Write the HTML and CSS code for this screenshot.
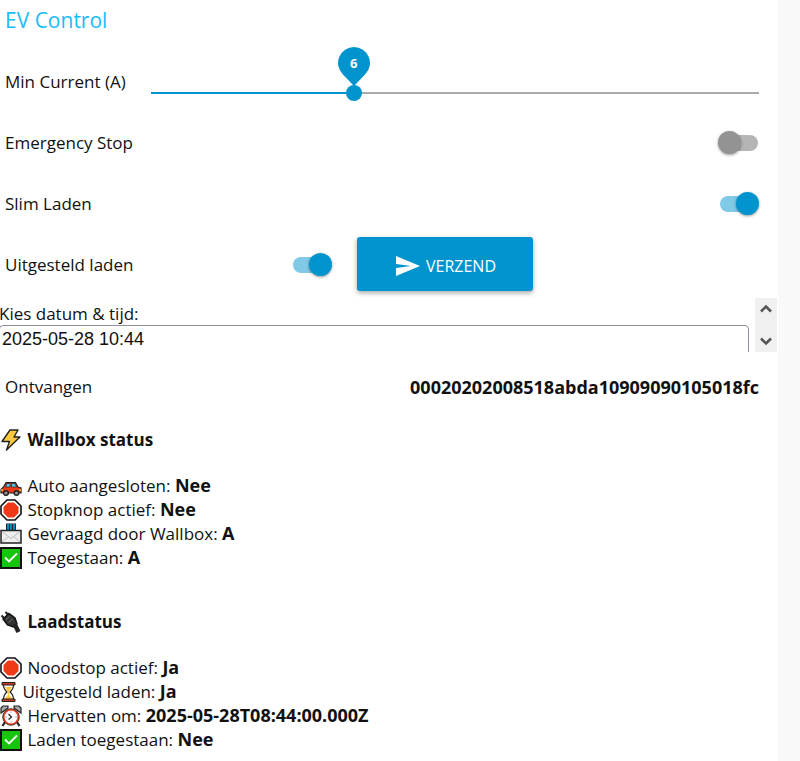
FILE: index.html
```html
<!DOCTYPE html>
<html lang="nl">
<head>
    <meta charset="UTF-8">
    <meta name="viewport" content="width=device-width, initial-scale=1.0">
    <title>EV Control</title>
    <link rel="stylesheet" href="styles.css">
</head>
<body>
    <svg class="symbols" aria-hidden="true">
        <symbol id="stop" viewBox="0 0 22 22">
            <path d="M7 1h8l6 6v8l-6 6H7l-6-6V7z" fill="#fff" stroke="#111" stroke-width="1.6"/>
            <path d="M8 3.5h6L18.500 8v6L14 18.500H8L3.500 14V8z" fill="#f03a17"/>
        </symbol>
        <symbol id="check" viewBox="0 0 22 22">
            <path d="M1 1h20v20H1z" fill="#16c60c" stroke="#111" stroke-width="2"/>
            <path d="M5 10.500l4 4 8-8" fill="none" stroke="#fff" stroke-width="1.800"/>
        </symbol>
    </svg>

    <main class="card">
        <h1>EV Control</h1>

        <div class="row">
            <label for="current" class="slider-label">Min Current (A)</label>
            <div class="slider" id="slider">
                <input type="range" id="current" min="0" max="18" value="6">
                <output class="pin" for="current">
                    <svg viewBox="0 0 32 40" aria-hidden="true"><path d="M16 0a16 16 0 0 1 11.300 27.300L16 39 4.700 27.300A16 16 0 0 1 16 0z" fill="#0094ce"/></svg>
                    <span id="currentValue">6</span>
                </output>
            </div>
        </div>

        <div class="row">
            <label for="emergency">Emergency Stop</label>
            <input type="checkbox" class="switch" id="emergency">
        </div>

        <div class="row">
            <label for="smart">Slim Laden</label>
            <input type="checkbox" class="switch" id="smart" checked>
        </div>

        <div class="columns">
            <div class="row">
                <label for="delayed">Uitgesteld laden</label>
                <input type="checkbox" class="switch" id="delayed" checked>
            </div>
            <button type="button" class="send">
                <svg viewBox="0 0 24 20" aria-hidden="true"><path d="M0 0l24 10L0 20v-8l15-2L0 8z" fill="#fff"/></svg>
                Verzend
            </button>
        </div>

        <div class="picker">
            <div class="picker-field">
                <label for="date">Kies datum &amp; tijd:</label>
                <input type="text" id="date" value="2025-05-28 10:44">
            </div>
            <div class="scroller">
                <button type="button" aria-label="Omhoog"><svg viewBox="0 0 12 9"><path d="M1 7.500l5-5 5 5" fill="none" stroke="#555" stroke-width="2.600"/></svg></button>
                <button type="button" aria-label="Omlaag"><svg viewBox="0 0 12 9"><path d="M1 1.500l5 5 5-5" fill="none" stroke="#555" stroke-width="2.600"/></svg></button>
            </div>
        </div>

        <div class="row">
            <span>Ontvangen</span>
            <b>00020202008518abda10909090105018fc</b>
        </div>

        <section class="status">
            <h2>
                <svg class="icon" viewBox="0 0 22 22"><path d="M10 1h8l-4 7h6L6.500 21l3-8.500H2z" fill="#ffc83d" stroke="#222" stroke-width="1.400" stroke-linejoin="round"/></svg>
                Wallbox status
            </h2>
            <ul>
                <li>
                    <svg class="icon" viewBox="0 0 22 22">
                        <path d="M1 14.500L3.500 12 6 7.500h9.500L18 12l3 1v5H1z" fill="#f03a17" stroke="#222" stroke-width="1.200"/>
                        <path d="M7 8.500h3.200V12H5.500zM11.500 8.500h3.200l2 3.500h-5.200z" fill="#55c8f0" stroke="#222" stroke-width=".7"/>
                        <path d="M1 15h2M19 15h2" stroke="#ffc83d" stroke-width="1.500"/>
                        <circle cx="6" cy="18" r="2.300" fill="#999" stroke="#222" stroke-width="1.500"/>
                        <circle cx="16.500" cy="18" r="2.300" fill="#999" stroke="#222" stroke-width="1.500"/>
                    </svg>
                    Auto aangesloten: <b>Nee</b>
                </li>
                <li><svg class="icon"><use href="#stop"/></svg> Stopknop actief: <b>Nee</b></li>
                <li>
                    <svg class="icon" viewBox="0 0 22 22">
                        <path d="M6 .5h10v7H6z" fill="#222"/>
                        <path d="M8 1v6M11 1v6M14 1v6" stroke="#0ba5e0" stroke-width="1.600"/>
                        <path d="M1 7.500h20v12.500H1z" fill="#eee" stroke="#222" stroke-width="1.500"/>
                        <path d="M2 8.500l9 7 9-7M2 19l6.500-5.500M20 19l-6.500-5.500" fill="none" stroke="#bbb"/>
                    </svg>
                    Gevraagd door Wallbox: <b>A</b>
                </li>
                <li><svg class="icon"><use href="#check"/></svg> Toegestaan: <b>A</b></li>
            </ul>
        </section>

        <section class="status">
            <h2>
                <svg class="icon" viewBox="0 0 22 22">
                    <path d="M1.500 4.500l4 4M5.500 1l4 4" stroke="#222" stroke-width="2"/>
                    <path d="M3 8l6-5.500 6 4.500 2 6-3.500 3-6-2z" fill="#333" stroke="#111" stroke-width="1.400"/>
                    <path d="M6 8.500l3.500-3M8.500 11.500l4-3.500" stroke="#777" stroke-width=".8"/>
                    <path d="M14.500 13l4 8" stroke="#222" stroke-width="4.500"/>
                </svg>
                Laadstatus
            </h2>
            <ul>
                <li><svg class="icon"><use href="#stop"/></svg> Noodstop actief: <b>Ja</b></li>
                <li>
                    <svg class="icon narrow" viewBox="0 0 16 22">
                        <path d="M3 3.500h10c0 4-1 5.500-3.500 7.500 2.500 2 3.500 3.500 3.500 7.500H3c0-4 1-5.500 3.500-7.500C4 9 3 7.500 3 3.500z" fill="#fff" stroke="#222" stroke-width="1.200"/>
                        <path d="M4.500 6h7L8.600 11v3l3.400 4H4l3.400-4v-3z" fill="#ffc83d"/>
                        <path d="M1.500 1.500h13v2.500h-13zM1.500 18h13v2.500h-13z" fill="#c93a1e" stroke="#222"/>
                    </svg>
                    Uitgesteld laden: <b>Ja</b>
                </li>
                <li>
                    <svg class="icon" viewBox="0 0 22 22">
                        <path d="M5 17l-2.500 4M17 17l2.500 4" stroke="#222" stroke-width="2.200"/>
                        <path d="M1 8V3l2-2h5v2zM21 8V3l-2-2h-5v2z" fill="#aaa" stroke="#222" stroke-width="1.200"/>
                        <circle cx="11" cy="12" r="8.300" fill="#f03a17" stroke="#222" stroke-width=".8"/>
                        <circle cx="11" cy="12" r="6.500" fill="#fff"/>
                        <path d="M8.500 9l3 3-3 2.500" fill="none" stroke="#222" stroke-width="1.200"/>
                        <path d="M11 6.500v1M11 16.500v1M5.500 12h1M15.500 12h1" stroke="#666"/>
                    </svg>
                    Hervatten om: <b>2025-05-28T08:44:00.000Z</b>
                </li>
                <li><svg class="icon"><use href="#check"/></svg> Laden toegestaan: <b>Nee</b></li>
            </ul>
        </section>
    </main>

    <script>
        const current = document.getElementById('current');

        function updateSlider() {
            document.getElementById('slider').style.setProperty('--value', current.value / current.max);
            document.getElementById('currentValue').textContent = current.value;
        }

        current.addEventListener('input', updateSlider);
        updateSlider();
    </script>
</body>
</html>
```
FILE: styles.css
```css
* {
    box-sizing: border-box;
}
body {
    margin: 0;
    padding-right: 22px;
    background-color: #f9f9f9;
    color: #111;
    font-family: "Open Sans", "Noto Sans", sans-serif;
    font-size: 17px;
    line-height: 24px;
}
b {
    font-size: 18px;
}
.symbols {
    position: absolute;
    width: 0;
    height: 0;
}
.card {
    display: flex;
    flex-direction: column;
    gap: 7px;
    min-height: 100vh;
    background-color: #fff;
}
h1 {
    height: 47px;
    margin: 0;
    padding-left: 5px;
    color: #17bdfb;
    font-size: 21px;
    font-weight: normal;
    line-height: 40px;
}
.row {
    display: flex;
    align-items: center;
    justify-content: space-between;
    gap: 22px;
    height: 54px;
    padding: 1px 19px 0 5px;
}
.slider-label {
    min-width: 124px;
}
.slider {
    position: relative;
    flex: 1;
    height: 54px;
}
.slider input {
    appearance: none;
    display: block;
    width: calc(100% + 16px);
    height: 16px;
    margin: 30px -8px 0;
    background: none;
    cursor: pointer;
}
.slider input::-webkit-slider-runnable-track {
    height: 16px;
    background:
        linear-gradient(#0094ce, #0094ce) 8px 7px / calc((100% - 16px) * var(--value)) 2px no-repeat,
        linear-gradient(#aaa, #aaa) 8px 7px / calc(100% - 16px) 2px no-repeat;
}
.slider input::-webkit-slider-thumb {
    appearance: none;
    width: 16px;
    height: 16px;
    border-radius: 50%;
    background-color: #0094ce;
}
.pin {
    position: absolute;
    top: -8px;
    left: calc(100% * var(--value));
    width: 32px;
    height: 40px;
    margin-left: -16px;
    color: #fff;
    font-size: 13px;
    font-weight: bold;
    line-height: 32px;
    text-align: center;
    pointer-events: none;
}
.pin svg {
    position: absolute;
    inset: 0;
}
.pin span {
    position: relative;
}
.switch {
    appearance: none;
    position: relative;
    width: 41px;
    height: 24px;
    margin: 0;
    cursor: pointer;
}
.switch::before {
    content: "";
    position: absolute;
    top: 4px;
    left: 2px;
    width: 38px;
    height: 16px;
    border-radius: 8px;
    background-color: #b5b5b5;
}
.switch::after {
    content: "";
    position: absolute;
    top: 0;
    left: 0;
    width: 23px;
    height: 23px;
    border-radius: 50%;
    background-color: #939393;
    box-shadow: 0 1px 3px rgba(0, 0, 0, 0.4);
}
.switch:checked::before {
    background-color: #80c9e7;
}
.switch:checked::after {
    left: 18px;
    background-color: #0094ce;
}
.columns {
    display: grid;
    grid-template-columns: 351fr 176fr 239fr;
    gap: 6px;
}
.send {
    display: flex;
    align-items: center;
    justify-content: center;
    gap: 6px;
    padding: 3px 0 0 2px;
    border: none;
    border-radius: 3px;
    background-color: #0094ce;
    box-shadow: 0 2px 5px rgba(0, 0, 0, 0.35);
    color: #fff;
    font-family: inherit;
    font-size: 16px;
    text-transform: uppercase;
    cursor: pointer;
}
.send svg {
    width: 24px;
    height: 20px;
}
.picker {
    display: flex;
    justify-content: space-between;
    height: 54px;
    overflow: hidden;
}
.picker-field {
    flex: 1;
    margin: 4px 6px 0 -1px;
}
.picker label {
    display: block;
    height: 23px;
}
.picker input {
    width: 100%;
    height: 32px;
    padding: 0 2px 4px;
    border: 1px solid #8f8f9d;
    border-radius: 4px;
    color: #111;
    font-family: "Liberation Sans", Arial, sans-serif;
    font-size: 18px;
}
.scroller {
    display: flex;
    flex-direction: column;
    justify-content: space-between;
    width: 22px;
    margin-right: 1px;
    background-color: #f0f0f0;
}
.scroller button {
    height: 21px;
    padding: 0;
    border: none;
    background: none;
    line-height: 0;
}
.scroller svg {
    width: 12px;
    height: 9px;
}
.status {
    padding-top: 8px;
}
.status + .status {
    padding-top: 34px;
}
.status h2 {
    margin: 0 0 21px;
    font-size: 17px;
    line-height: 24px;
}
.status ul {
    margin: 0;
    padding: 0;
    list-style: none;
}
.status li {
    height: 24px;
}
.icon {
    width: 22px;
    height: 22px;
    margin-right: 1px;
    vertical-align: -5px;
}
.icon.narrow {
    width: 17px;
}
```
